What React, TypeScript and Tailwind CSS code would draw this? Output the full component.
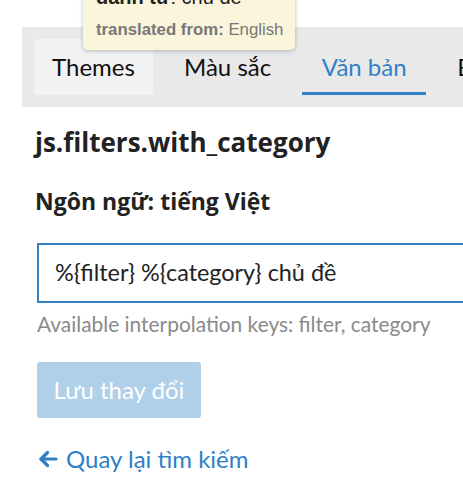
export default function App() {
  return (
    <div className="relative w-[463px] h-[500px] overflow-hidden bg-white font-['Lato',sans-serif] text-[#222]">
      <div className="pt-[27px] pl-[22px]">
        <nav className="flex items-center bg-[#e9e9e9] h-[80px] pl-[12px] w-[520px] whitespace-nowrap">
          <div className="h-[56px] w-[119px] flex items-center justify-center rounded bg-[#f2f2f2] text-[24px] text-[#111]">Themes</div>
          <div className="h-[56px] px-[31px] flex items-center text-[24px] text-[#111]">Màu sắc</div>
          <div className="h-[56px] w-[124px] flex items-center justify-center text-[24px] text-[#3180c8] border-b-[3px] border-[#3180c8] pt-[3px]">Văn bản</div>
          <div className="h-[56px] pl-[31px] flex items-center text-[24px] text-[#111]">Bảng</div>
        </nav>
        <div className="pl-[13px] pt-[17px]">
          <h1 className="font-['Open_Sans',sans-serif] text-[26px] font-bold leading-[36px] text-[#222]">js.filters.with_category</h1>
          <h2 className="font-['Open_Sans',sans-serif] mt-[26px] text-[23px] font-bold leading-[30px] text-[#222]">Ngôn ngữ: tiếng Việt</h2>
          <div className="mt-[27px] ml-[2px] h-[60px] w-[500px] border-2 border-[#3180c8] flex items-center pl-[16px] text-[23.4px] text-[#222]">
            %{'{'}filter{'}'} %{'{'}category{'}'} chủ đề
          </div>
          <p className="ml-[2px] mt-[8px] text-[20.9px] text-[#8a8a8a] leading-[26px]">Available interpolation keys: filter, category</p>
          <button className="block ml-[2px] mt-[25px] h-[56px] w-[164px] rounded-[3px] bg-[#b0cfe9] text-white text-[24px]">Lưu thay đổi</button>
          <a className="ml-[3px] mt-[26px] flex items-center gap-[8px] text-[24px] leading-[30px] text-[#2f7fc6]">
            <svg width="20" height="18" viewBox="0 0 20 18" fill="none" stroke="currentColor" strokeWidth="3.2" strokeLinecap="round" strokeLinejoin="round">
              <path d="M18 9H3" />
              <path d="M9.5 2.5L3 9l6.5 6.5" />
            </svg>
            <span>Quay lại tìm kiếm</span>
          </a>
        </div>
      </div>
      <div className="absolute left-[83px] top-[-20px] w-[212px] h-[70px] rounded-[5px] bg-[#fbf5dc] shadow-[0_1px_4px_rgba(0,0,0,0.25)] px-[13px] pt-[5px] font-['Liberation_Sans',sans-serif] whitespace-nowrap">
        <div className="text-[20px] leading-[24px] text-[#222]"><span className="font-bold">danh từ</span>: chủ đề</div>
        <div className="mt-[11px] text-[16.8px] leading-[20px] text-[#777]"><span className="font-bold">translated from:</span> English</div>
      </div>
    </div>
  );
}
